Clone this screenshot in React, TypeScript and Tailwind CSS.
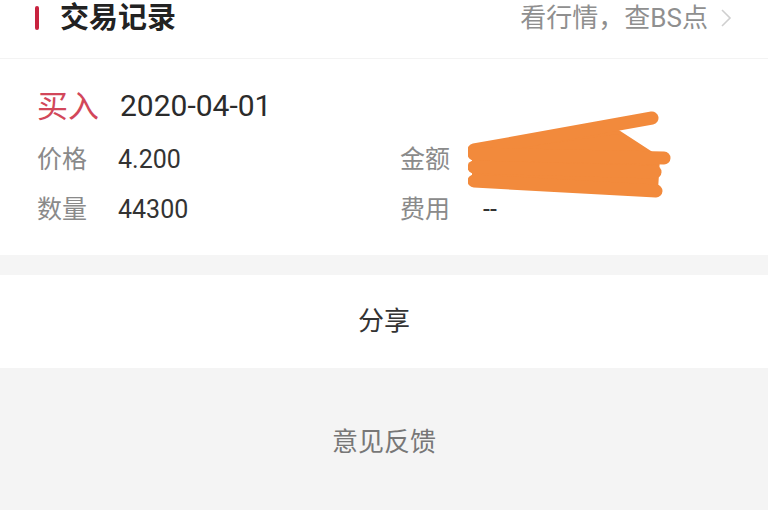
const font = { fontFamily: 'Roboto, "Noto Sans CJK SC", sans-serif' };

type Field = { label: string; value: string; masked?: boolean };

const rows: [Field, Field][] = [
  [
    { label: "价格", value: "4.200" },
    { label: "金额", value: "", masked: true },
  ],
  [
    { label: "数量", value: "44300" },
    { label: "费用", value: "--" },
  ],
];

// hand-drawn cover over the amount
const Scribble = () => (
  <svg
    className="absolute left-[68px] top-[-27px]"
    width="205"
    height="95"
    viewBox="0 0 205 95"
  >
    <g
      stroke="#f28a3c"
      strokeWidth="13"
      strokeLinecap="round"
      strokeLinejoin="round"
      fill="#f28a3c"
    >
      <path d="M6 44 L150 24 L190 50 L188 82 L6 76 Z" strokeWidth="4" />
      <path d="M6 42 L184 10" />
      <path d="M6 46 L196 50" />
      <path d="M6 59 L187 64" />
      <path d="M6 73 L188 83" />
    </g>
  </svg>
);

const Cell = ({ field, labelWidth }: { field: Field; labelWidth: string }) => (
  <div className="relative flex items-center h-[50px]">
    <span className={`${labelWidth} text-[25px] text-[#8a8a8a]`}>{field.label}</span>
    <span className="text-[25px] text-[#333]">{field.value}</span>
    {field.masked && <Scribble />}
  </div>
);

const App = () => {
  return (
    <div className="w-[768px] h-[510px] overflow-hidden bg-white" style={font}>
      <div className="h-[59px] border-b border-[#f3f3f3]">
        <div className="flex items-center justify-between h-[36px] pl-[35px] pr-[36px]">
          <div className="flex items-center">
            <span className="w-[4px] h-[24px] bg-[#c8233f] rounded-sm" />
            <span className="ml-[21px] text-[29px] font-bold text-[#222] leading-none">
              交易记录
            </span>
          </div>
          <div className="flex items-center text-[26px] text-[#8f8f8f] leading-none">
            <span>看行情，查BS点</span>
            <svg className="ml-[12px]" width="12" height="20" viewBox="0 0 12 20">
              <path d="M2 2 L10 10 L2 18" fill="none" stroke="#cfcfcf" strokeWidth="1.6" />
            </svg>
          </div>
        </div>
      </div>

      <div className="pl-[37px] pt-[29px] pb-[20px]">
        <div className="flex items-center h-[36px] leading-none">
          <span className="text-[31px] text-[#d2475a]">买入</span>
          <span className="ml-[21px] text-[30px] text-[#2b2b2b]">2020-04-01</span>
        </div>
        <div className="mt-[11px]">
          {rows.map(([left, right]) => (
            <div key={left.label} className="grid grid-cols-[363px_1fr]">
              <Cell field={left} labelWidth="w-[81px]" />
              <Cell field={right} labelWidth="w-[83px]" />
            </div>
          ))}
        </div>
      </div>

      <div className="h-[20px] bg-[#f5f5f5]" />

      <button className="w-full h-[93px] flex items-center justify-center text-[26px] text-[#333]">
        分享
      </button>

      <button className="w-full h-[148px] flex items-center justify-center bg-[#f4f4f4] text-[26px] text-[#777]">
        意见反馈
      </button>
    </div>
  );
};

export default App;
